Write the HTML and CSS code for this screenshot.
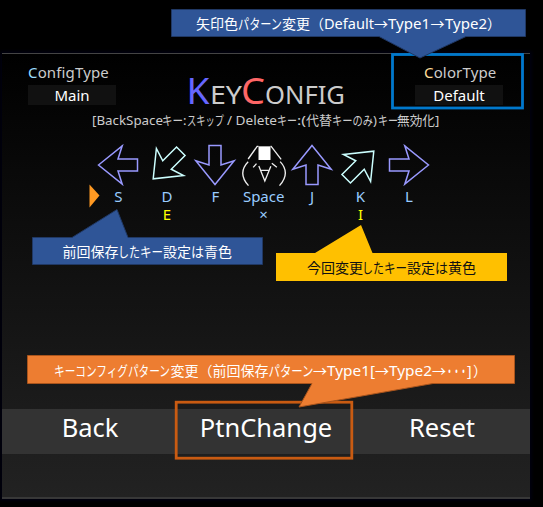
FILE: index.html
```html
<!DOCTYPE html>
<html lang="ja">
<head>
<meta charset="utf-8">
<title>KeyConfig</title>
<link rel="stylesheet" href="styles.css">
</head>
<body>
<svg class="defs" width="0" height="0">
  <symbol id="arrow" viewBox="-24 -21 48 42"><path d="M-19.5 0 4.2-19.2 0-6H19.5V6H0L4.2 19.2Z"/></symbol>
</svg>
<main class="panel">
  <header class="top">
    <section class="option"><h2><span class="blue">C</span>onfigType</h2><button>Main</button></section>
    <h1><svg width="156" height="50" viewBox="190 68 156 50">
      <text class="big violet" x="186.500" y="104" textLength="23" lengthAdjust="spacingAndGlyphs">K</text>
      <text class="small" x="210" y="104" textLength="32" lengthAdjust="spacingAndGlyphs">EY</text>
      <text class="big red" x="241" y="104" textLength="24" lengthAdjust="spacingAndGlyphs">C</text>
      <text class="small" x="265" y="104" textLength="80" lengthAdjust="spacingAndGlyphs">ONFIG</text>
    </svg></h1>
    <section class="option"><h2><span class="gold">C</span>olorType</h2><button>Default</button></section>
  </header>
  <p class="hint"><svg width="350" height="20" viewBox="91 111 350 20">
    <text x="92" y="125" textLength="71" lengthAdjust="spacingAndGlyphs">[BackSpace</text>
    <text x="162" y="125" textLength="21" lengthAdjust="spacingAndGlyphs">キー</text>
    <text x="183" y="125">:</text>
    <text x="187" y="125" textLength="37" lengthAdjust="spacingAndGlyphs">スキップ</text>
    <text x="227" y="125" textLength="50" lengthAdjust="spacingAndGlyphs">/ Delete</text>
    <text x="277" y="125" textLength="20" lengthAdjust="spacingAndGlyphs">キー</text>
    <text x="297" y="125" textLength="9" lengthAdjust="spacingAndGlyphs">:(</text>
    <text x="306" y="125" textLength="26" lengthAdjust="spacingAndGlyphs">代替</text>
    <text x="332" y="125" textLength="41" lengthAdjust="spacingAndGlyphs">キーのみ</text>
    <text x="373" y="125">)</text>
    <text x="378" y="125" textLength="20" lengthAdjust="spacingAndGlyphs">キー</text>
    <text x="397" y="125" textLength="38" lengthAdjust="spacingAndGlyphs">無効化</text>
    <text x="435" y="125">]</text>
  </svg></p>
  <div class="keys">
    <div class="key"><svg class="violet-line"><use href="#arrow"/></svg><b>S</b></div>
    <div class="key"><svg class="mint-line down-left"><use href="#arrow"/></svg><b>D</b><b class="changed">E</b></div>
    <div class="key"><svg class="violet-line down"><use href="#arrow"/></svg><b>F</b></div>
    <div class="key"><svg class="face" viewBox="-24 -21 48 42"><g transform="scale(.3333) translate(-100.5 -90)">
      <rect x="84" y="34" width="36" height="41"/>
      <path d="M84 34H80L53 72M120 34H122L152 73M53 80Q20 114 54 152M149 80Q181 114 147 152M68 97 78 86M124 85 139 97M85 93 103 138 121 94M91 106H114"/>
    </g></svg><b>Space</b><b>×</b></div>
    <div class="key"><svg class="violet-line up"><use href="#arrow"/></svg><b>J</b></div>
    <div class="key"><svg class="mint-line up-right"><use href="#arrow"/></svg><b>K</b><b class="changed">I</b></div>
    <div class="key"><svg class="violet-line right"><use href="#arrow"/></svg><b>L</b></div>
  </div>
  <nav class="actions"><button>Back</button><button>PtnChange</button><button>Reset</button></nav>
</main>
<svg class="notes" width="543" height="507" viewBox="0 0 543 507">
  <path class="cursor" d="M89.5 184.500 99.500 195.500 89.500 207.500Z"/>
  <rect class="frame-blue" x="392.500" y="54.500" width="130" height="53.500"/>
  <rect class="frame-orange" x="176.200" y="402.200" width="175.600" height="56"/>
  <path class="note-blue" d="M171.500 9.500H525.500V36.500H466L420 58 379 36.500H171.500Z"/>
  <path class="note-blue" d="M32.500 237.500H72L117 209.500 128 237.500H262.500V264.500H32.500Z"/>
  <path class="note-yellow" d="M276 253H315L361 225 372.500 253H507V281H276Z"/>
  <path class="note-orange" d="M27.500 355.500H514.500V383.500H433L299 407 312 383.500H27.500Z"/>
  <g class="note-text">
    <text x="196" y="28.500" textLength="42" lengthAdjust="spacingAndGlyphs">矢印色</text>
    <text x="238" y="28.500" textLength="44" lengthAdjust="spacingAndGlyphs">パターン</text>
    <text x="282" y="28.500" textLength="28" lengthAdjust="spacingAndGlyphs">変更</text>
    <text x="310" y="28.500">（</text>
    <text x="324" y="28.500" textLength="50" lengthAdjust="spacingAndGlyphs">Default</text>
    <text class="cjk" x="374" y="28.500">→</text>
    <text x="388" y="28.500" textLength="42" lengthAdjust="spacingAndGlyphs">Type1</text>
    <text class="cjk" x="430.500" y="28.500">→</text>
    <text x="445" y="28.500" textLength="42" lengthAdjust="spacingAndGlyphs">Type2</text>
    <text x="487" y="28.500">）</text>

    <text x="62.500" y="257" textLength="56" lengthAdjust="spacingAndGlyphs">前回保存</text>
    <text x="118" y="257" textLength="22" lengthAdjust="spacingAndGlyphs">した</text>
    <text x="140" y="257" textLength="23" lengthAdjust="spacingAndGlyphs">キー</text>
    <text x="163" y="257" textLength="28" lengthAdjust="spacingAndGlyphs">設定</text>
    <text x="191" y="257" textLength="13" lengthAdjust="spacingAndGlyphs">は</text>
    <text x="204" y="257" textLength="28" lengthAdjust="spacingAndGlyphs">青色</text>

    <g class="dark">
    <text x="307" y="273" textLength="56" lengthAdjust="spacingAndGlyphs">今回変更</text>
    <text x="362" y="273" textLength="22" lengthAdjust="spacingAndGlyphs">した</text>
    <text x="384" y="273" textLength="23" lengthAdjust="spacingAndGlyphs">キー</text>
    <text x="407" y="273" textLength="28" lengthAdjust="spacingAndGlyphs">設定</text>
    <text x="435" y="273" textLength="13" lengthAdjust="spacingAndGlyphs">は</text>
    <text x="448" y="273" textLength="28" lengthAdjust="spacingAndGlyphs">黄色</text>
    </g>

    <text x="54" y="375.500" textLength="116" lengthAdjust="spacingAndGlyphs">キーコンフィグパターン</text>
    <text x="170.500" y="375.500" textLength="28" lengthAdjust="spacingAndGlyphs">変更</text>
    <text x="198.500" y="375.500">（</text>
    <text x="212.500" y="375.500" textLength="56" lengthAdjust="spacingAndGlyphs">前回保存</text>
    <text x="268.500" y="375.500" textLength="45" lengthAdjust="spacingAndGlyphs">パターン</text>
    <text class="cjk" x="313" y="375.500">→</text>
    <text x="327" y="375.500" textLength="48" lengthAdjust="spacingAndGlyphs">Type1[</text>
    <text class="cjk" x="375" y="375.500">→</text>
    <text x="389" y="375.500" textLength="43" lengthAdjust="spacingAndGlyphs">Type2</text>
    <text class="cjk" x="432" y="375.500">→</text>
    <text class="dots" x="446" y="375.500" textLength="21" lengthAdjust="spacingAndGlyphs">・・・</text>
    <text x="467" y="375.500">]</text>
    <text x="473" y="375.500">）</text>
  </g>
</svg>
</body>
</html>
```
FILE: styles.css
```css
* { box-sizing: border-box; margin: 0; padding: 0; }
body {
  width: 543px; height: 507px; overflow: hidden; background: #000;
  padding: 53px 13px 8px 2px; position: relative;
  font-family: "Noto Sans", "Noto Sans CJK JP", sans-serif; color: #ccc;
}
.defs { position: absolute; }
.panel {
  width: 528px; height: 446px; display: flex; flex-direction: column;
  border-top: 1px solid #444; border-bottom: 2px solid #383838;
  background: linear-gradient(#000, #222) padding-box;
  box-shadow: 0 0 3px 2px #00000f;
}
.top { height: 57px; padding: 8px 27px 0 26px; display: flex; justify-content: space-between; align-items: flex-start; }
.option { width: 88px; }
h2 { font-size: 15px; line-height: 20px; height: 23px; font-weight: 400; letter-spacing: .15px; white-space: nowrap; }
.option:last-child h2 { padding-left: 9px; }
.option button { display: block; width: 88px; height: 20px; border: 0; background: #111; color: #fff; font: 15px/20px "Noto Sans", sans-serif; }
.blue { color: #99ddff; }
.gold { color: #ffdd99; }
h1 { height: 50px; margin: 6px 0 0; flex: 1; padding-left: 74px; }
h1 svg, .hint svg { display: block; overflow: visible; }
h1 text { fill: #ccc; font-weight: 400; }
h1 .big { font-size: 36px; }
h1 .small { font-size: 25px; }
h1 .violet { fill: #6666ff; }
h1 .red { fill: #ff6666; }
.hint { height: 33px; padding-left: 89px; }
.hint text { fill: #ccc; font-size: 13px; }
.keys { display: grid; grid-template-columns: repeat(7, 48.4px); padding-left: 92.3px; height: 81px; }
.key { display: flex; flex-direction: column; align-items: center; }
.key svg { width: 48px; height: 42px; overflow: visible; flex: none; fill: none; stroke-width: 1.5; }
.key use { overflow: visible; }
symbol { overflow: visible; }
.violet-line { stroke: #9999ff; }
.mint-line { stroke: #ccffff; }
.down { transform: rotate(-90deg); }
.up { transform: rotate(90deg); }
.right { transform: rotate(180deg); }
.down-left { transform: rotate(-45deg); }
.up-right { transform: rotate(135deg); }
.face rect { fill: #fff; stroke: none; }
.face path { fill: none; stroke: #eee; stroke-width: 4; }
.key b { font-size: 15px; line-height: 18px; font-weight: 400; color: #99ccff; }
.key svg + b { margin-top: 1px; }
.key .changed { color: #ffff00; }
.actions { display: grid; grid-template-columns: repeat(3, 176px); height: 45px; margin-top: auto; margin-bottom: 43px; background: #333; }
.actions button { border: 0; background: none; color: #fff; font: 25.5px/34px "Noto Sans", sans-serif; padding-bottom: 9px; white-space: nowrap; display: flex; justify-content: center; align-items: center; }
.notes { position: absolute; left: 0; top: 0; pointer-events: none; }
.cursor { fill: #ff9922; }
.frame-blue, .frame-orange { fill: none; stroke-width: 2.8; }
.frame-blue { stroke: #0078cc; }
.frame-orange { stroke: #c95b12; }
.note-blue { fill: #2f5597; stroke: #203864; }
.note-yellow { fill: #ffc000; }
.note-orange { fill: #ed7d31; stroke: #a9541c; }
.note-text { fill: #fff; font-size: 14px; }
.note-text .dark { fill: #111; }
.note-text .cjk { font-family: "Noto Sans CJK JP", sans-serif; }
.note-text .dots { font-weight: 700; }
```
